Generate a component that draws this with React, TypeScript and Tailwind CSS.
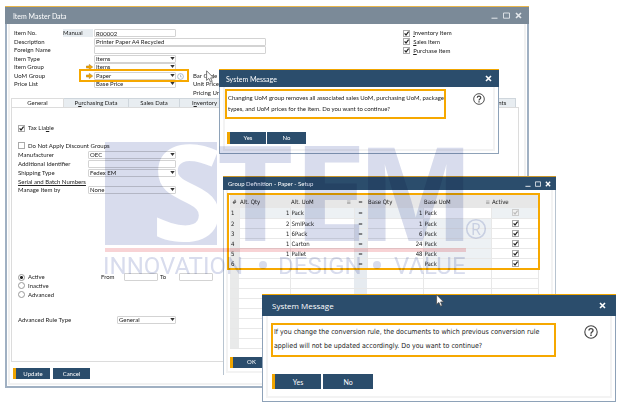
import type { ReactNode } from "react";

const controlClass =
  "h-[8px] w-full appearance-none rounded-[1px] border border-[#d3d3d3] bg-white px-px leading-[6px] text-[#222] outline-none";

const primaryButtonClass =
  "border-l-[3px] border-[#f0a500] bg-[#2b4d6c] text-center text-white hover:bg-[#365d80]";

const buttonClass = "bg-[#2b4d6c] text-center text-white hover:bg-[#365d80]";

type UomRow = {
  altQty: string;
  altUom: string;
  baseQty: string;
  baseUom: string;
};

const uomRows: UomRow[] = [
  { altQty: "1", altUom: "Pack", baseQty: "1", baseUom: "Pack" },
  { altQty: "2", altUom: "SmlPack", baseQty: "1", baseUom: "Pack" },
  { altQty: "1", altUom: "6Pack", baseQty: "6", baseUom: "Pack" },
  { altQty: "1", altUom: "Carton", baseQty: "24", baseUom: "Pack" },
  { altQty: "1", altUom: "Pallet", baseQty: "48", baseUom: "Pack" },
  { altQty: "", altUom: "", baseQty: "", baseUom: "Pack" },
];

const blankRows = [7, 8, 9, 10, 11, 12, 13, 14];

function SelectBox({ id, value }: { id: string; value: string }) {
  return (
    <span className="relative block w-full">
      <select id={id} defaultValue={value} className={`${controlClass} block`}>
        <option value={value}>{value}</option>
      </select>
      <svg
        viewBox="0 0 5 3"
        className="pointer-events-none absolute right-[1px] top-[2px] h-[3px] w-[5px]"
      >
        <path d="M.3 0h4.4L2.5 3z" fill="#333" />
      </svg>
    </span>
  );
}

function CheckBox({
  id,
  label,
  checked = true,
  disabled = false,
}: {
  id: string;
  label?: string;
  checked?: boolean;
  disabled?: boolean;
}) {
  return (
    <span className="relative inline-flex h-[7px] w-[7px] shrink-0">
      <input
        id={id}
        type="checkbox"
        aria-label={label}
        defaultChecked={checked}
        disabled={disabled}
        className="peer h-[7px] w-[7px] appearance-none border border-[#aaa] bg-white disabled:border-[#ccc] disabled:bg-[#f0f0f0]"
      />
      <svg
        viewBox="0 0 7 7"
        className="pointer-events-none absolute inset-0 hidden h-[7px] w-[7px] text-[#222] peer-checked:block peer-disabled:text-[#bbb]"
      >
        <path d="M1.6 3.4 3 5l2.6-3.4" fill="none" stroke="currentColor" strokeWidth="1.2" />
      </svg>
    </span>
  );
}

function LinkArrow() {
  return (
    <svg viewBox="0 0 7 6" className="h-[6px] w-[7px]">
      <path
        d="M.3 2h3V.4L6.7 3 3.3 5.6V4h-3z"
        fill="#f6a800"
        stroke="#a87413"
        strokeWidth=".5"
      />
    </svg>
  );
}

function WindowIcon({ kind, className }: { kind: "min" | "max" | "close"; className: string }) {
  return (
    <button type="button" aria-label={kind} className={className}>
      <svg viewBox="0 0 7 7" className="h-full w-full" fill="none" stroke="currentColor">
        {kind === "min" ? <path d="M.5 6.2h6" /> : null}
        {kind === "max" ? <path d="M.5 1h6v5.2h-6z" strokeWidth=".9" /> : null}
        {kind === "close" ? <path d="m1 1 5 5M6 1 1 6" strokeWidth="1.6" /> : null}
      </svg>
    </button>
  );
}

function HelpIcon({ className }: { className: string }) {
  return (
    <svg viewBox="0 0 14 14" className={className} fill="none" stroke="#444">
      <circle cx="7" cy="7" r="6.2" strokeWidth="1.1" />
      <path d="M5 5.6C5 3 9 3 9 5.4 9 7 7 7 7 8.7" strokeWidth="1.4" />
      <path d="M7 9.6v1.5" strokeWidth="1.5" />
    </svg>
  );
}

function Pointer({ className }: { className: string }) {
  return (
    <svg viewBox="0 0 9 13" className={`pointer-events-none absolute h-[13px] w-[9px] ${className}`}>
      <path
        d="M.6.8v9.6l2.3-2 1.7 3.8 1.6-.8-1.6-3.5h3z"
        fill="#fff"
        stroke="#444"
        strokeWidth=".7"
      />
    </svg>
  );
}

function FormRow({
  label,
  htmlFor,
  middle,
  extra,
  wide = false,
  children,
}: {
  label?: string;
  htmlFor?: string;
  middle?: ReactNode;
  extra?: string;
  wide?: boolean;
  children?: ReactNode;
}) {
  return (
    <div className="relative flex items-center">
      <label htmlFor={htmlFor} className="w-[48px] shrink-0">
        {label}
      </label>
      <div className="flex w-[32px] shrink-0 justify-end pr-[1px]">{middle}</div>
      <div className={wide ? "w-[172px]" : "w-[82px]"}>{children}</div>
      {extra ? <span className="ml-[17px]">{extra}</span> : null}
    </div>
  );
}

function ItemMasterWindow() {
  return (
    <section className="absolute left-[5px] top-[6px] w-[84%]">
      <header className="flex h-[18px] items-center border-t border-[#e8b64c] bg-[#7b8a98] pl-[8px] pr-[7px] text-[7px] text-white">
        <h1>Item Master Data</h1>
        <div className="ml-auto flex items-center gap-[5px] text-[#e4e8ec]">
          <WindowIcon kind="min" className="h-[7px] w-[7px]" />
          <WindowIcon kind="max" className="h-[7px] w-[7px]" />
          <WindowIcon kind="close" className="h-[7px] w-[7px]" />
        </div>
      </header>
      <div className="border-x-2 border-b-2 border-[#a0b0c2] bg-white px-[1px] pb-[1px]">
        <div className="border-x-2 border-b-2 border-[#f1f1f1] pb-[4px]">
          <div className="flex pl-[4px] pt-[5px]">
            <div className="grid h-[68px] grid-rows-8">
              <FormRow
                label="Item No."
                htmlFor="item-no"
                middle={
                  <span className="w-[30px] bg-[#e8edf1] leading-[8px]">Manual</span>
                }
              >
                <input id="item-no" defaultValue="R00002" className={`${controlClass} block bg-[#eef1f3]`} />
              </FormRow>
              <FormRow label="Description" htmlFor="description" wide>
                <input
                  id="description"
                  defaultValue="Printer Paper A4 Recycled"
                  className={`${controlClass} block`}
                />
              </FormRow>
              <FormRow label="Foreign Name" htmlFor="foreign-name" wide>
                <input id="foreign-name" className={`${controlClass} block`} />
              </FormRow>
              <FormRow label="Item Type" htmlFor="item-type">
                <SelectBox id="item-type" value="Items" />
              </FormRow>
              <FormRow label="Item Group" htmlFor="item-group" middle={<LinkArrow />}>
                <SelectBox id="item-group" value="Items" />
              </FormRow>
              <FormRow label="UoM Group" htmlFor="uom-group" middle={<LinkArrow />} extra="Bar Code">
                <SelectBox id="uom-group" value="Paper" />
                <span className="pointer-events-none absolute -top-[3px] left-[65px] z-10 h-[13px] w-[110px] border-2 border-[#f6a800]" />
                <svg viewBox="0 0 7 7" className="absolute left-[163px] top-[1px] h-[7px] w-[7px]" fill="none" stroke="#8fa3b8" strokeWidth=".7">
                  <circle cx="3.5" cy="3.5" r="2.9" />
                  <path d="M3.5 1.8v2h1.2" />
                </svg>
              </FormRow>
              <FormRow label="Price List" htmlFor="price-list" extra="Unit Price">
                <SelectBox id="price-list" value="Base Price" />
              </FormRow>
              <FormRow extra="Pricing Unit" />
            </div>
            <div className="ml-auto grid h-[26px] w-[121px] grid-rows-3">
              <label className="flex items-center gap-[3px]">
                <CheckBox id="inventory-item" />
                <span><u>I</u>nventory Item</span>
              </label>
              <label className="flex items-center gap-[3px]">
                <CheckBox id="sales-item" />
                <span><u>S</u>ales Item</span>
              </label>
              <label className="flex items-center gap-[3px]">
                <CheckBox id="purchase-item" />
                <span><u>P</u>urchase Item</span>
              </label>
            </div>
          </div>

          <nav className="ml-[1px] mr-[8px] mt-[1px] flex h-[9px] bg-white">
            <button type="button" className="w-[53px] border-x border-t border-[#ddd] bg-white">
              General
            </button>
            <button type="button" className="w-[65px] border-r border-t border-[#cfd6dc] bg-[#e8edf1]">
              P<u>u</u>rchasing Data
            </button>
            <button type="button" className="w-[51px] border-r border-t border-[#cfd6dc] bg-[#e8edf1]">
              Sales Data
            </button>
            <button type="button" className="w-[64px] border-r border-t border-[#cfd6dc] bg-[#e8edf1]">
              I<u>n</u>ventory Data
            </button>
            <button type="button" className="ml-auto w-[52px] border-r border-t border-[#cfd6dc] bg-[#e8edf1]">
              Attachments
            </button>
          </nav>

          <div className="ml-[1px] mr-[5px] border border-[#dcdcdc] pb-[37px] pl-[6px] pt-[16px]">
            <label className="flex h-[8px] items-center gap-[3px]">
              <CheckBox id="tax-liable" />
              <span>Tax Lia<u>b</u>le</span>
            </label>
            <label className="mt-[9px] flex h-[9px] items-center gap-[3px]">
              <CheckBox id="no-discount" checked={false} />
              <span>Do Not Apply Discount Groups</span>
            </label>
            <div className="mt-[1px] grid h-[26px] grid-rows-3">
              <div className="flex items-center">
                <label htmlFor="manufacturer" className="w-[70px]">Manufacturer</label>
                <div className="w-[88px]"><SelectBox id="manufacturer" value="OEC" /></div>
              </div>
              <div className="flex items-center">
                <label htmlFor="identifier" className="w-[70px]">Additional Identifier</label>
                <div className="w-[88px]">
                  <input id="identifier" className={`${controlClass} block`} />
                </div>
              </div>
              <div className="flex items-center">
                <label htmlFor="shipping" className="w-[70px]">Shipping Type</label>
                <div className="w-[88px]"><SelectBox id="shipping" value="Fedex EM" /></div>
              </div>
            </div>
            <h2 className="mt-[1px] h-[8px] underline">Serial and Batch Numbers</h2>
            <div className="flex h-[8px] items-center">
              <label htmlFor="manage-by" className="w-[70px]">Manage Item by</label>
              <div className="w-[88px]"><SelectBox id="manage-by" value="None" /></div>
            </div>

            <div className="mt-[79px] flex items-start">
              <div className="grid h-[26px] w-[83px] grid-rows-3">
                {["Active", "Inactive", "Advanced"].map((status) => (
                  <label key={status} className="flex items-center gap-[3px]">
                    <input
                      type="radio"
                      name="status"
                      defaultChecked={status === "Active"}
                      className="h-[7px] w-[7px] appearance-none rounded-full border border-[#999] bg-white checked:bg-[radial-gradient(circle,#222_1px,#fff_2px)]"
                    />
                    {status}
                  </label>
                ))}
              </div>
              <label htmlFor="from" className="w-[23px]">From</label>
              <input id="from" className="h-[8px] w-[34px] rounded-[1px] border border-[#d3d3d3]" />
              <label htmlFor="to" className="w-[21px] pl-[2px]">To</label>
              <input id="to" className="h-[8px] w-[34px] rounded-[1px] border border-[#d3d3d3]" />
            </div>

            <div className="mt-[17px] flex h-[8px] items-center">
              <label htmlFor="rule-type" className="w-[99px]">Advanced Rule Type</label>
              <div className="w-[59px]"><SelectBox id="rule-type" value="General" /></div>
            </div>
          </div>

          <footer className="mt-[6px] flex gap-[3px] pl-[3px]">
            <button type="button" className={`${primaryButtonClass} h-[11px] w-[37px]`}>Update</button>
            <button type="button" className={`${buttonClass} h-[11px] w-[37px]`}>Cancel</button>
          </footer>
        </div>
      </div>
      <Pointer className="left-[201px] top-[64px]" />
    </section>
  );
}

function UomMessage() {
  return (
    <section role="dialog" aria-label="System Message" className="absolute left-[219px] top-[69px] w-[280px]">
      <header className="flex h-[18px] items-center border-t border-[#f0a500] bg-[#2b4d6c] px-[7px] text-[7px] text-white">
        <h2>System Message</h2>
        <WindowIcon kind="close" className="ml-auto h-[7px] w-[7px]" />
      </header>
      <div className="border border-t-0 border-[#8ea2b8] bg-white px-[3px] pb-[2px]">
        <div className="border-x-2 border-b-2 border-[#f3f3f3] pb-[5px] pt-[2px]">
          <div className="flex items-start justify-between pr-[8px]">
            <p className="h-[30px] w-[221px] whitespace-nowrap border-2 border-[#f6a800] pl-px pt-px leading-[11px]">
              Changing UoM group removes all associated sales UoM, purchasing UoM, package
              <br />
              types, and UoM prices for the item. Do you want to continue?
            </p>
            <HelpIcon className="mt-[4px] h-[12px] w-[12px]" />
          </div>
          <div className="mt-[13px] flex gap-[1px] pl-[2px]">
            <button type="button" className={`${primaryButtonClass} h-[12px] w-[39px]`}>Yes</button>
            <button type="button" className={`${buttonClass} h-[12px] w-[39px]`}>No</button>
          </div>
        </div>
      </div>
    </section>
  );
}

function GroupDefinitionWindow() {
  return (
    <section className="absolute left-[223px] top-[176px] w-[333px]">
      <header className="flex h-[14px] items-center border-t border-[#c9962a] bg-[#2b4d6c] pl-[5px] pr-[5px] text-white">
        <h2>Group Definition - Paper - Setup</h2>
        <div className="ml-auto flex items-center gap-[4px]">
          <WindowIcon kind="min" className="h-[6px] w-[6px]" />
          <WindowIcon kind="max" className="h-[6px] w-[6px]" />
          <WindowIcon kind="close" className="h-[6px] w-[6px]" />
        </div>
      </header>
      <div className="border-x border-[#b8c4d0] bg-white px-[2px] pb-[2px]">
        <div className="relative border-x-2 border-b-2 border-[#f3f3f3] pb-[3px] pl-[2px] pt-[5px]">
          <table className="w-[309px] table-fixed border-collapse font-['DejaVu_Sans_Condensed','DejaVu_Sans',sans-serif] leading-[9px]">
            <colgroup>
              <col className="w-[9px]" />
              <col className="w-[51px]" />
              <col className="w-[64px]" />
              <col className="w-[13px]" />
              <col className="w-[56px]" />
              <col className="w-[68px]" />
              <col />
            </colgroup>
            <thead>
              <tr className="h-[13px] bg-[#e7e7e7] text-left">
                <th className="p-0 text-center font-normal">#</th>
                <th className="p-0 pl-px font-normal">Alt. Qty</th>
                <th className="p-0 pl-px font-normal">
                  <span className="flex justify-between pr-[3px]">Alt. UoM <span className="text-[#888]">≡</span></span>
                </th>
                <th className="p-0 text-center font-normal">=</th>
                <th className="p-0 pl-px font-normal">Base Qty</th>
                <th className="p-0 pl-px font-normal">
                  <span className="flex justify-between pr-[1px]">Base UoM <span className="text-[#888]">≡</span></span>
                </th>
                <th className="p-0 pl-px font-normal">Active</th>
              </tr>
            </thead>
            <tbody>
              {uomRows.map((row, index) => (
                <tr
                  key={index}
                  className={`h-[10px] border-b border-[#e8e8e8] ${index === 0 ? "bg-[#edf1f4]" : ""}`}
                >
                  <td className="border-r border-[#e8e8e8] bg-[#e9eaea] p-0 pl-px">{index + 1}</td>
                  <td className="border-r border-[#e8e8e8] p-0 text-right">{row.altQty}</td>
                  <td className="border-r border-[#e8e8e8] p-0 pl-px">{row.altUom}</td>
                  <td className="border-r border-[#e8e8e8] bg-[#e6ebf0] p-0 text-center">=</td>
                  <td className="border-r border-[#e8e8e8] p-0 text-right">{row.baseQty}</td>
                  <td className={`border-r border-[#e8e8e8] p-0 pl-px ${index === 0 ? "bg-white" : "bg-[#edf1f4]"}`}>
                    {row.baseUom}
                  </td>
                  <td className="p-0">
                    <span className="flex justify-center">
                      <CheckBox id={`active-${index}`} label={`Active ${index + 1}`} disabled={index === 0} />
                    </span>
                  </td>
                </tr>
              ))}
              {blankRows.map((row) => (
                <tr key={row} className="h-[10px] border-b border-[#e8e8e8]">
                  <td className="bg-[#e9eaea] p-0" />
                  <td className="border-r border-[#e8e8e8] p-0" />
                  <td className="p-0" />
                  <td className="bg-[#e6ebf0] p-0" />
                  <td className="border-r border-[#e8e8e8] p-0" />
                  <td className="border-r border-[#e8e8e8] p-0" />
                  <td className="border-r border-[#e8e8e8] p-0" />
                </tr>
              ))}
            </tbody>
          </table>
          <div className="pointer-events-none absolute -left-[1px] top-[3px] h-[77px] w-[313px] border-2 border-[#f6a800]" />
          <button type="button" className={`${primaryButtonClass} mt-[8px] block h-[11px] w-[40px]`}>OK</button>
        </div>
      </div>
    </section>
  );
}

function Watermark() {
  return (
    <svg
      viewBox="105 140 390 140"
      className="pointer-events-none absolute left-[105px] top-[140px] h-[140px] w-[390px] overflow-visible mix-blend-multiply"
      fill="#d8dced"
    >
      <rect x="105" y="142" width="112" height="103" />
      <g fontFamily="'Open Sans', sans-serif" fontWeight="700" fontSize="132">
        <text x="151" y="241" fill="#fff">S</text>
        <text x="217" y="241">T</text>
        <text x="293" y="241">E</text>
      </g>
      <text x="359" y="241" fontFamily="'Liberation Sans', sans-serif" fontWeight="700" fontSize="136">M</text>
      <circle cx="476" cy="229" r="9.3" fill="none" stroke="#d8dced" strokeWidth="1.6" />
      <text x="471" y="235" fontFamily="'Open Sans', sans-serif" fontSize="16">R</text>
      <rect x="105" y="248" width="361" height="4" fill="#f8d3d5" />
      <g fontFamily="Roboto, sans-serif" fontSize="24">
        <text x="103" y="274">INNOVATION</text>
        <text x="278" y="274">DESIGN</text>
        <text x="394" y="274">VALUE</text>
      </g>
      <circle cx="263" cy="265" r="4" />
      <circle cx="377" cy="265" r="4" />
    </svg>
  );
}

function ConversionMessage() {
  return (
    <section role="dialog" aria-label="System Message" className="absolute left-[262px] top-[294px] w-[354px] text-[7px]">
      <header className="flex h-[22px] items-center border-t border-[#f0a500] bg-[#2b4d6c] px-[10px] font-['Open_Sans',sans-serif] text-[8px] text-white">
        <h2>System Message</h2>
        <WindowIcon kind="close" className="ml-auto h-[7px] w-[7px]" />
      </header>
      <div className="border border-t-0 border-[#8ea2b8] bg-white px-[3px] pb-[3px]">
        <div className="border-x-2 border-b-2 border-[#f3f3f3] pb-[7px] pl-[3px] pt-[7px]">
          <div className="flex items-start justify-between pr-[12px]">
            <p className="h-[34px] w-[285px] whitespace-nowrap border-2 border-[#f6a800] pl-[1px] font-['DejaVu_Sans_Condensed','DejaVu_Sans',sans-serif] leading-[14px]">
              If you change the conversion rule, the documents to which previous conversion rule
              <br />
              applied will not be updated accordingly. Do you want to continue?
            </p>
            <HelpIcon className="mt-[2px] h-[14px] w-[14px]" />
          </div>
          <div className="mt-[17px] flex gap-[2px] pl-px">
            <button type="button" className={`${primaryButtonClass} h-[15px] w-[49px]`}>Yes</button>
            <button type="button" className={`${buttonClass} h-[15px] w-[50px]`}>No</button>
          </div>
        </div>
      </div>
      <Pointer className="left-[174px] top-0" />
    </section>
  );
}

export default function App() {
  return (
    <main className="relative isolate min-h-screen overflow-hidden bg-white font-[Lato,'Liberation_Sans',sans-serif] text-[6px] leading-[8px] text-[#222]">
      <ItemMasterWindow />
      <UomMessage />
      <GroupDefinitionWindow />
      <Watermark />
      <ConversionMessage />
    </main>
  );
}
